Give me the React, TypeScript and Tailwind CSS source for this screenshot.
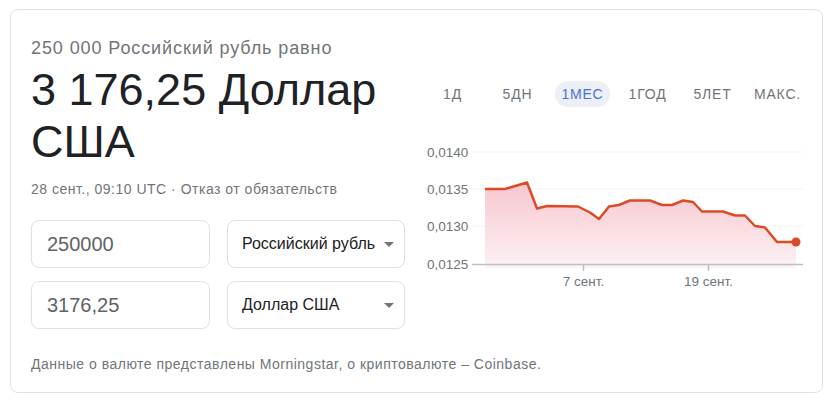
const pts: [number, number][] = [
  [485, 189], [505, 189], [527, 182.5], [537, 208.5], [547, 206], [578, 206.5],
  [590, 212.5], [599, 219], [609, 206.5], [619, 205], [630, 200.5], [650, 200.5],
  [662, 205], [672, 205], [683, 200.5], [693, 202], [702, 211.5], [723, 211.5],
  [735, 215.5], [745, 215.5], [755, 226], [765, 227.5], [777, 242], [796, 242],
];

const tabs = ["1Д", "5ДН", "1МЕС", "1ГОД", "5ЛЕТ", "МАКС."];

function Chart() {
  const line = pts.map((p, i) => (i ? "L" : "M") + p[0] + " " + p[1]).join(" ");
  const area = line + " L796 268 L485 268 Z";
  return (
    <svg width="400" height="150" viewBox="415 140 400 150" className="block">
      <defs>
        <linearGradient id="fill" x1="0" y1="0" x2="0" y2="1">
          <stop offset="0%" stopColor="#f7c6cf" />
          <stop offset="100%" stopColor="#fdf2f4" />
        </linearGradient>
      </defs>
      {[152, 189, 226].map((y) => (
        <line key={y} x1="472" x2="803" y1={y} y2={y} stroke="#f1f3f4" strokeWidth="1" />
      ))}
      <path d={area} fill="url(#fill)" />
      <line x1="472" x2="803" y1="264.5" y2="264.5" stroke="#bdc1c6" strokeWidth="1.5" />
      <line x1="583.5" x2="583.5" y1="264" y2="271" stroke="#bdc1c6" strokeWidth="1.5" />
      <line x1="708.5" x2="708.5" y1="264" y2="271" stroke="#bdc1c6" strokeWidth="1.5" />
      <path d={line} fill="none" stroke="#dd4b26" strokeWidth="2.5" strokeLinejoin="round" />
      <circle cx="796" cy="242" r="4.5" fill="#dd4b26" />
      <g fill="#70757a" fontSize="13.5" fontFamily="'Liberation Sans', Arial, sans-serif">
        {[["0,0140", 157], ["0,0135", 194], ["0,0130", 231], ["0,0125", 269]].map(([t, y]) => (
          <text key={t} x="427" y={y}>{t}</text>
        ))}
        <text x="583.5" y="286" textAnchor="middle">7 сент.</text>
        <text x="708.5" y="286" textAnchor="middle">19 сент.</text>
      </g>
    </svg>
  );
}

function Field({ value }: { value: string }) {
  return (
    <div className="w-[179px] h-[48px] border border-[#dfe1e5] rounded-lg flex items-center pl-[15px] text-[20px] text-[#5f6368]">
      {value}
    </div>
  );
}

function Select({ value }: { value: string }) {
  return (
    <div className="w-[178px] h-[48px] border border-[#dfe1e5] rounded-lg flex items-center justify-between pl-[14px] pr-[10px] text-[16px] text-[#202124]">
      <span>{value}</span>
      <span className="w-0 h-0 border-l-[5px] border-r-[5px] border-t-[5px] border-l-transparent border-r-transparent border-t-[#70757a]" />
    </div>
  );
}

export default function App() {
  return (
    <div className="pt-[9px] pl-[10px] bg-white min-h-screen font-['Liberation_Sans',Arial,sans-serif]">
      <div className="w-[813px] h-[384px] border border-[#dfe1e5] rounded-lg pl-5 pt-[26px] flex flex-col">
        <div className="flex">
          <div className="w-[374px] flex flex-col">
            <div className="text-[18px] leading-6 tracking-[0.9px] text-[#70757a]">250 000 Российский рубль равно</div>
            <div className="mt-[4px] text-[45px] leading-[52px] text-[#202124]">3 176,25 Доллар США</div>
            <div className="mt-[11px] text-[14px] leading-5 tracking-[0.5px] text-[#70757a]">28 сент., 09:10 UTC · Отказ от обязательств</div>
            <div className="mt-[21px] flex flex-col gap-[13px]">
              <div className="flex gap-[17px]">
                <Field value="250000" />
                <Select value="Российский рубль" />
              </div>
              <div className="flex gap-[17px]">
                <Field value="3176,25" />
                <Select value="Доллар США" />
              </div>
            </div>
          </div>
          <div className="ml-[10px] pt-[45px] flex flex-col">
            <div className="flex pl-[5px]">
              {tabs.map((t) => (
                <div key={t} className="w-[65px] flex justify-center">
                  <span
                    className={
                      t === "1МЕС"
                        ? "h-[26px] px-[6px] rounded-full bg-[#eceff5] text-[#4a6fdc] text-[14px] tracking-[0.8px] flex items-center"
                        : "h-[26px] text-[#70757a] text-[14px] tracking-[0.8px] flex items-center"
                    }
                  >
                    {t}
                  </span>
                </div>
              ))}
            </div>
            <div className="mt-[33px]">
              <Chart />
            </div>
          </div>
        </div>
        <div className="mt-[25px] text-[14px] leading-5 tracking-[0.5px] text-[#70757a]">
          Данные о валюте представлены Morningstar, о криптовалюте – Coinbase.
        </div>
      </div>
    </div>
  );
}
